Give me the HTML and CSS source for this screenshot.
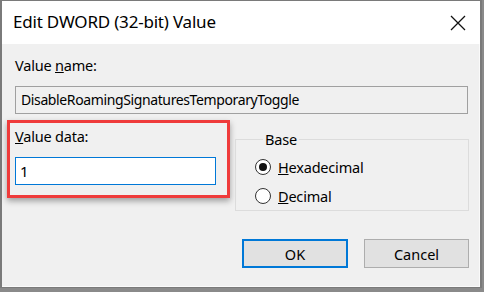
FILE: index.html
```html
<!DOCTYPE html>
<html>
<head>
<meta charset="utf-8">
<link rel="stylesheet" href="styles.css">
</head>
<body>
<div class="window">
  <div class="titlebar">
    <span class="title">Edit DWORD (32-bit) Value</span>
    <svg class="close" width="16" height="16" viewBox="0 0 16 16"><path d="M1 1 L15 15 M15 1 L1 15" stroke="#111" stroke-width="1.3" fill="none"/></svg>
  </div>
  <div class="content">
    <div class="label">Value <u>n</u>ame:</div>
    <div class="namebox">DisableRoamingSignaturesTemporaryToggle</div>
    <div class="row">
      <div class="highlight">
        <div class="label"><u>V</u>alue data:</div>
        <div class="databox">1</div>
      </div>
      <fieldset class="group">
        <legend>Base</legend>
        <div class="radio"><span class="dot checked"></span><span><u>H</u>exadecimal</span></div>
        <div class="radio"><span class="dot"></span><span><u>D</u>ecimal</span></div>
      </fieldset>
    </div>
    <div class="buttons">
      <div class="btn default">OK</div>
      <div class="btn">Cancel</div>
    </div>
  </div>
</div>
</body>
</html>
```
FILE: styles.css
```css
html, body {
  margin: 0;
  padding: 0;
}
body {
  background: #8a8a8a;
  width: 484px;
  height: 292px;
  overflow: hidden;
  font-family: "Noto Sans", "Liberation Sans", sans-serif;
  color: #000;
}
.window {
  width: 478px;
  height: 286px;
  border: 1px solid #7a7a7a;
  border-left-width: 2px;
  border-right-width: 2px;
  background: #f0f0f0;
  display: flex;
  flex-direction: column;
  box-shadow: inset -1px -1px 0 #fafafa;
}
.titlebar {
  height: 43px;
  background: #fff;
  display: flex;
  align-items: center;
  justify-content: space-between;
  padding: 0 13px 0 11px;
  flex: none;
}
.title {
  font-size: 17px;
  letter-spacing: -0.2px;
  position: relative;
  top: -1px;
}
.close {
  margin-right: 1px;
}
.content {
  flex: 1;
  padding: 12px 11px 0 13px;
  display: flex;
  flex-direction: column;
}
.label {
  font-size: 14.5px;
  line-height: 19px;
  letter-spacing: -0.2px;
}
.namebox {
  margin-top: 11px;
  border: 1px solid #a0a0a0;
  font-size: 14px;
  line-height: 26px;
  padding-left: 5px;
  letter-spacing: -0.38px;
  box-sizing: border-box;
  height: 28px;
  width: 453px;
}
.row {
  display: flex;
  margin-top: 6px;
}
.highlight {
  margin-left: -8px;
  width: 223px;
  height: 78px;
  box-sizing: border-box;
  border: 3px solid #ef3b3b;
  padding: 4px 11px 0 5px;
  box-shadow: 0 3px 6px rgba(0, 0, 0, 0.35);
}
.databox {
  margin-top: 11px;
  height: 28px;
  box-sizing: border-box;
  border: 1px solid #0078d7;
  background: #fff;
  font-size: 15px;
  line-height: 26px;
  padding-left: 4px;
}
.group {
  margin: 11px 0 0 5px;
  padding: 5px 0 0 19px;
  width: 234px;
  height: 80px;
  box-sizing: border-box;
  border: 1px solid #dcdcdc;
  min-width: 0;
}
.group legend {
  font-size: 14.5px;
  padding: 0 2px;
  margin-left: 8px;
  letter-spacing: -0.2px;
  line-height: 16px;
}
.radio {
  display: flex;
  align-items: center;
  gap: 7px;
  font-size: 14.5px;
  letter-spacing: -0.2px;
  height: 29px;
}
.dot {
  width: 14px;
  height: 14px;
  border: 1px solid #333;
  border-radius: 50%;
  background: #fff;
  display: flex;
  align-items: center;
  justify-content: center;
}
.dot.checked::after {
  content: "";
  width: 8px;
  height: 8px;
  border-radius: 50%;
  background: #111;
}
.buttons {
  display: flex;
  justify-content: flex-end;
  gap: 16px;
  margin-top: 28px;
}
.btn {
  width: 105px;
  height: 29px;
  box-sizing: border-box;
  border: 1px solid #adadad;
  background: #e1e1e1;
  font-size: 14.5px;
  display: flex;
  align-items: center;
  justify-content: center;
}
.btn.default {
  border: 2px solid #0078d7;
  width: 106px;
}
```
